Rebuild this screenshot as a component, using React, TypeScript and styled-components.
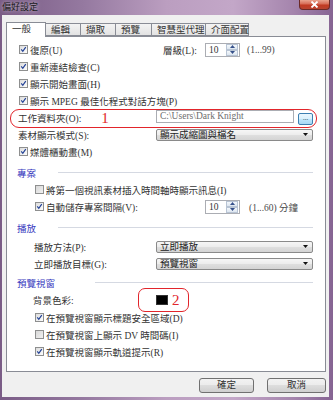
import React from "react";
import styled, { createGlobalStyle } from "styled-components";

const GlobalStyle = createGlobalStyle`
  html, body { margin: 0; padding: 0; }
  body {
    width: 333px;
    height: 400px;
    overflow: hidden;
    font-family: "Liberation Serif", "Noto Sans CJK TC", serif;
    font-size: 9.5px;
    color: #333;
  }
`;

const Frame = styled.div`
  width: 333px;
  height: 400px;
  box-sizing: border-box;
  display: flex;
  flex-direction: column;
  padding: 0 4px 3px 2px;
  background: linear-gradient(90deg, #7a5c86 0%, #9579a0 25%, #bb9ec0 50%, #c3a7c8 70%, #a585ad 88%, #866493 100%);
`;

const TitleBar = styled.div`
  height: 15px;
  display: flex;
  justify-content: space-between;
  align-items: flex-start;
`;

const Title = styled.span`
  margin-top: 2px;
  font-size: 9px;
  line-height: 11px;
  color: #1b1b1b;
  text-shadow: 0 0 4px rgba(255, 255, 255, 0.7);
`;

const CloseBtn = styled.div`
  width: 31px;
  height: 10px;
  margin-right: -1px;
  box-sizing: border-box;
  border: 1px solid #6b2a26;
  border-top: none;
  border-radius: 0 0 4px 4px;
  background: linear-gradient(#e9a48f 0%, #d66b55 45%, #c13a22 55%, #b8432f 100%);
  display: flex;
  align-items: center;
  justify-content: center;
`;

const Client = styled.div`
  flex: 1;
  background: #f0f0f0;
  padding: 7px 3px 0 4px;
  display: flex;
  flex-direction: column;
`;

const Tabs = styled.div`
  display: flex;
  align-items: flex-end;
  height: 14px;
  position: relative;
  z-index: 1;
`;

const Tab = styled.div<{ $w: number; $active?: boolean }>`
  width: ${(p) => p.$w}px;
  height: ${(p) => (p.$active ? 15 : 13)}px;
  box-sizing: border-box;
  margin-right: -1px;
  margin-bottom: ${(p) => (p.$active ? -1 : 0)}px;
  border: 1px solid #898c95;
  border-bottom: ${(p) => (p.$active ? "none" : "1px solid #898c95")};
  background: ${(p) => (p.$active ? "#fff" : "linear-gradient(#f3f3f3, #e3e3e3)")};
  padding-left: 5px;
  line-height: 12px;
  white-space: nowrap;
`;

const Panel = styled.div`
  height: 336px;
  box-sizing: border-box;
  background: #fff;
  border: 1px solid #898c95;
  padding: 4px 12px 0 11px;
  display: flex;
  flex-direction: column;
`;

const Row = styled.div<{ $h?: number; $mt?: number }>`
  display: grid;
  grid-template-columns: 138px 1fr;
  align-items: center;
  height: ${(p) => p.$h ?? 17}px;
  margin-top: ${(p) => p.$mt ?? 0}px;
  position: relative;
`;

const Cell = styled.div<{ $indent?: number }>`
  display: flex;
  align-items: center;
  padding-left: ${(p) => p.$indent ?? 0}px;
  white-space: nowrap;
`;

const CheckLabel = styled.label`
  display: flex;
  align-items: center;
  gap: 2px;
  white-space: nowrap;
`;

const Box = styled.span<{ $off?: boolean }>`
  width: 9px;
  height: 9px;
  box-sizing: border-box;
  border: 1px solid #8e8f8f;
  background: ${(p) => (p.$off ? "linear-gradient(135deg, #d8d8d8, #f0f0f0)" : "linear-gradient(135deg, #dcdcdc, #fdfdfd)")};
  display: inline-flex;
  align-items: center;
  justify-content: center;
  overflow: visible;
`;

const SectionHead = styled.div<{ $mt: number }>`
  display: flex;
  align-items: center;
  height: 17px;
  margin-top: ${(p) => p.$mt}px;
  margin-left: -1px;
`;

const SectionTitle = styled.span<{ $w: number }>`
  width: ${(p) => p.$w}px;
  flex: none;
  color: #3a3cc0;
`;

const SectionLine = styled.div`
  flex: 1;
  height: 1px;
  background: #d5d9e2;
`;

const SideLabel = styled.span<{ $w: number }>`
  width: ${(p) => p.$w}px;
`;

const Spin = styled.div<{ $ml: number }>`
  width: 35px;
  height: 14px;
  box-sizing: border-box;
  margin-left: ${(p) => p.$ml}px;
  border: 1px solid #abadb3;
  display: flex;
  align-items: center;
`;

const SpinValue = styled.span`
  flex: 1;
  padding-left: 3px;
`;

const SpinArrows = styled.div`
  width: 12px;
  height: 12px;
  display: flex;
  flex-direction: column;
  margin-right: 1px;
`;

const SpinBtn = styled.div`
  flex: 1;
  box-sizing: border-box;
  border: 1px solid #b8c4d4;
  background: linear-gradient(#f4f8fc, #dde6f0);
  display: flex;
  align-items: center;
  justify-content: center;
`;

const Hint = styled.span<{ $ml: number }>`
  margin-left: ${(p) => p.$ml}px;
  color: #4a4a4a;
`;

const PathField = styled.div`
  width: 138px;
  height: 13px;
  box-sizing: border-box;
  border: 1px solid #abadb3;
  color: #6d6d6d;
  padding-left: 3px;
  line-height: 11px;
  overflow: hidden;
  align-self: flex-start;
`;

const Browse = styled.div`
  width: 15px;
  height: 12px;
  box-sizing: border-box;
  margin-left: 4px;
  margin-top: 3px;
  border: 1px solid #3c7fb1;
  border-radius: 2px;
  background: linear-gradient(#eaf6fd 0%, #d9f0fc 50%, #bee6fd 50%, #a7d9f5 100%);
  font-size: 7px;
  line-height: 8px;
  text-align: center;
  color: #333;
`;

const Select = styled.div`
  width: 100%;
  height: 12px;
  box-sizing: border-box;
  border: 1px solid #8a8a8a;
  border-radius: 2px;
  background: linear-gradient(#f6f6f6 0%, #ececec 50%, #dfdfdf 50%, #d4d4d4 100%);
  display: flex;
  align-items: center;
  justify-content: space-between;
  padding: 0 4px 0 3px;
  line-height: 10px;
  color: #222;
`;

const Annotated = styled.div<{ $l: number; $r: number; $t: number; $b: number; $rad: number }>`
  position: relative;
  display: flex;
  align-items: center;
  &::after {
    content: "";
    position: absolute;
    left: ${(p) => p.$l}px;
    right: ${(p) => p.$r}px;
    top: ${(p) => p.$t}px;
    bottom: ${(p) => p.$b}px;
    border: 1px solid #e2252b;
    border-radius: ${(p) => p.$rad}px;
    pointer-events: none;
  }
`;

const Mark = styled.span<{ $ml: number }>`
  margin-left: ${(p) => p.$ml}px;
  font-family: "Liberation Serif", serif;
  font-size: 15px;
  line-height: 14px;
  color: #e2252b;
`;

const Swatch = styled.span`
  width: 12px;
  height: 10px;
  box-sizing: border-box;
  border: 1px solid #333;
  background: #000;
`;

const Footer = styled.div`
  display: flex;
  justify-content: flex-end;
  gap: 13px;
  padding-top: 6px;
`;

const Button = styled.div<{ $w: number }>`
  width: ${(p) => p.$w}px;
  height: 15px;
  box-sizing: border-box;
  border: 1px solid #707070;
  border-radius: 3px;
  background: linear-gradient(#f2f2f2 0%, #ebebeb 50%, #dddddd 50%, #cfcfcf 100%);
  text-align: center;
  line-height: 13px;
  color: #333;
`;

function Check({ on = true, off = false }: { on?: boolean; off?: boolean }) {
  return (
    <Box $off={off}>
      {on && (
        <svg width="9" height="9" viewBox="0 0 9 9">
          <path d="M1.6 4.4 L3.6 6.8 L7.4 1.4" fill="none" stroke="#1f3f95" strokeWidth="1.5" />
        </svg>
      )}
    </Box>
  );
}

function CheckRow({ label, on = true, off = false, indent = 1 }: { label: string; on?: boolean; off?: boolean; indent?: number }) {
  return (
    <Row>
      <Cell $indent={indent}>
        <CheckLabel>
          <Check on={on} off={off} />
          {label}
        </CheckLabel>
      </Cell>
    </Row>
  );
}

function Spinner({ value, ml }: { value: string; ml: number }) {
  return (
    <Spin $ml={ml}>
      <SpinValue>{value}</SpinValue>
      <SpinArrows>
        <SpinBtn>
          <svg width="5" height="3" viewBox="0 0 5 3"><path d="M0 3 L2.5 0 L5 3Z" fill="#35508a" /></svg>
        </SpinBtn>
        <SpinBtn>
          <svg width="5" height="3" viewBox="0 0 5 3"><path d="M0 0 L2.5 3 L5 0Z" fill="#35508a" /></svg>
        </SpinBtn>
      </SpinArrows>
    </Spin>
  );
}

function Dropdown({ value }: { value: string }) {
  return (
    <Select>
      <span>{value}</span>
      <svg width="5" height="3" viewBox="0 0 5 3"><path d="M0 0 L5 0 L2.5 3Z" fill="#111" /></svg>
    </Select>
  );
}

const tabs = [
  { label: "一般", w: 40 },
  { label: "編輯", w: 36 },
  { label: "擷取", w: 36 },
  { label: "預覽", w: 37 },
  { label: "智慧型代理", w: 55 },
  { label: "介面配置", w: 44 },
];

export default function App() {
  return (
    <>
      <GlobalStyle />
      <Frame>
        <TitleBar>
          <Title>偏好設定</Title>
          <CloseBtn>
            <svg width="9" height="7" viewBox="0 0 9 7">
              <path d="M1.5 0.5 L7.5 6.5 M7.5 0.5 L1.5 6.5" stroke="#fff" strokeWidth="1.8" />
            </svg>
          </CloseBtn>
        </TitleBar>
        <Client>
          <Tabs>
            {tabs.map((t, i) => (
              <Tab key={t.label} $w={t.w} $active={i === 0}>
                {t.label}
              </Tab>
            ))}
          </Tabs>
          <Panel>
            <Row>
              <Cell $indent={1}>
                <CheckLabel>
                  <Check />
                  復原(U)
                </CheckLabel>
              </Cell>
              <Cell $indent={7}>
                <SideLabel $w={42}>層級(L):</SideLabel>
                <Spinner value="10" ml={0} />
                <Hint $ml={7}>(1...99)</Hint>
              </Cell>
            </Row>
            <CheckRow label="重新連結檢查(C)" />
            <CheckRow label="顯示開始畫面(H)" />
            <CheckRow label="顯示 MPEG 最佳化程式對話方塊(P)" />
            <Annotated $l={-8} $r={-4} $t={0} $b={-2} $rad={9}>
              <Row style={{ width: "100%" }}>
                <Cell>
                  工作資料夾(O):
                  <Mark $ml={20}>1</Mark>
                </Cell>
                <Cell>
                  <PathField>C:\Users\Dark Knight</PathField>
                  <Browse>...</Browse>
                </Cell>
              </Row>
            </Annotated>
            <Row>
              <Cell>素材顯示模式(S):</Cell>
              <Dropdown value="顯示成縮圖與檔名" />
            </Row>
            <CheckRow label="媒體櫃動畫(M)" />

            <SectionHead $mt={4}>
              <SectionTitle $w={41}>專案</SectionTitle>
              <SectionLine />
            </SectionHead>
            <CheckRow label="將第一個視訊素材插入時間軸時顯示訊息(I)" on={false} off indent={17} />
            <Row>
              <Cell $indent={17}>
                <CheckLabel>
                  <Check />
                  自動儲存專案間隔(V):
                </CheckLabel>
              </Cell>
              <Cell>
                <Spinner value="10" ml={49} />
                <Hint $ml={9}>(1...60) 分鐘</Hint>
              </Cell>
            </Row>

            <SectionHead $mt={4}>
              <SectionTitle $w={41}>播放</SectionTitle>
              <SectionLine />
            </SectionHead>
            <Row $mt={2}>
              <Cell $indent={16}>播放方法(P):</Cell>
              <Dropdown value="立即播放" />
            </Row>
            <Row>
              <Cell $indent={16}>立即播放目標(G):</Cell>
              <Dropdown value="預覽視窗" />
            </Row>

            <SectionHead $mt={2}>
              <SectionTitle $w={78}>預覽視窗</SectionTitle>
              <SectionLine />
            </SectionHead>
            <Row $h={18}>
              <Cell $indent={15}>背景色彩:</Cell>
              <Cell>
                <Annotated $l={-18} $r={-9} $t={-5} $b={-5} $rad={7}>
                  <Swatch />
                  <Mark $ml={4}>2</Mark>
                </Annotated>
              </Cell>
            </Row>
            <CheckRow label="在預覽視窗顯示標題安全區域(D)" indent={17} />
            <CheckRow label="在預覽視窗上顯示 DV 時間碼(I)" on={false} off indent={17} />
            <CheckRow label="在預覽視窗顯示軌道提示(R)" indent={17} />
          </Panel>
          <Footer>
            <Button $w={55}>確定</Button>
            <Button $w={59}>取消</Button>
          </Footer>
        </Client>
      </Frame>
    </>
  );
}
